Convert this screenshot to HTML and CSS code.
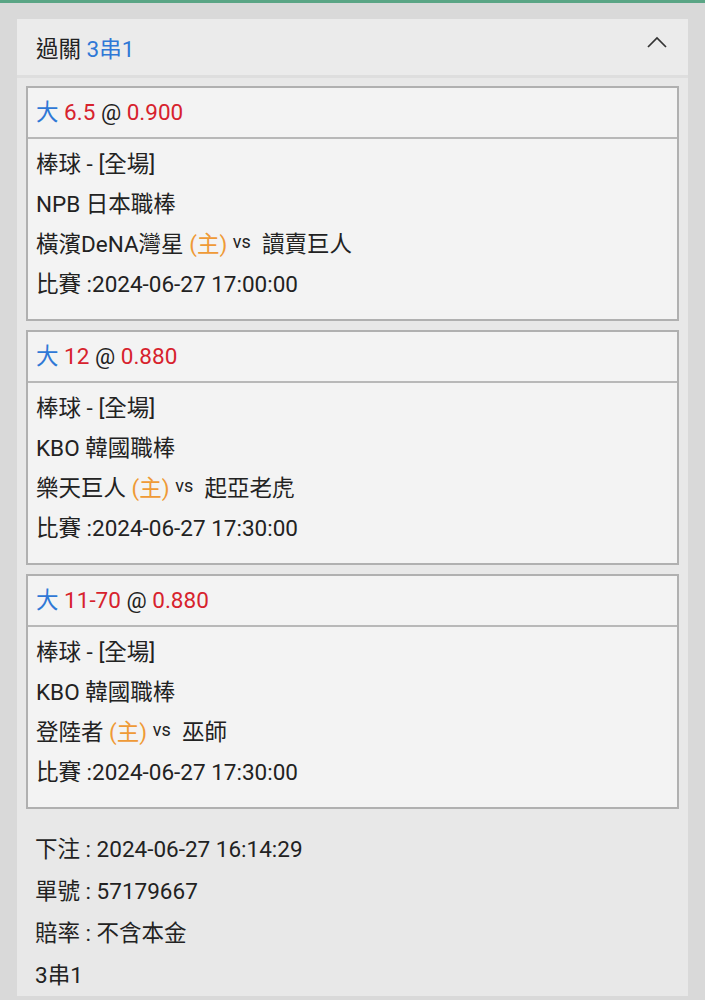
FILE: index.html
```html
<!DOCTYPE html>
<html lang="zh-Hant">

<head>
  <meta charset="UTF-8">
  <title>過關 3串1</title>
  <link rel="stylesheet" href="styles.css">
</head>

<body>
  <div class="panel">
    <div class="panel-head">
      <div class="title">過關 <span class="blue">3串1</span></div>
      <svg class="chevron" width="22" height="14" viewBox="0 0 22 14">
        <path d="M2 12 L11 3 L20 12" fill="none" stroke="#333" stroke-width="1.7" />
      </svg>
    </div>
    <div class="panel-body">
      <div class="bet">
        <div class="bet-title"><span class="blue">大</span> <span class="red">6.5</span> @ <span class="red">0.900</span></div>
        <div class="bet-info">
          <div>棒球 - [全場]</div>
          <div>NPB 日本職棒</div>
          <div>橫濱DeNA灣星 <span class="home">(主)</span> <sup>vs</sup> &nbsp;讀賣巨人</div>
          <div>比賽 :2024-06-27 17:00:00</div>
        </div>
      </div>
      <div class="bet">
        <div class="bet-title"><span class="blue">大</span> <span class="red">12</span> @ <span class="red">0.880</span></div>
        <div class="bet-info">
          <div>棒球 - [全場]</div>
          <div>KBO 韓國職棒</div>
          <div>樂天巨人 <span class="home">(主)</span> <sup>vs</sup> &nbsp;起亞老虎</div>
          <div>比賽 :2024-06-27 17:30:00</div>
        </div>
      </div>
      <div class="bet">
        <div class="bet-title"><span class="blue">大</span> <span class="red">11-70</span> @ <span class="red">0.880</span></div>
        <div class="bet-info">
          <div>棒球 - [全場]</div>
          <div>KBO 韓國職棒</div>
          <div>登陸者 <span class="home">(主)</span> <sup>vs</sup> &nbsp;巫師</div>
          <div>比賽 :2024-06-27 17:30:00</div>
        </div>
      </div>
      <div class="summary">
        <div>下注 : 2024-06-27 16:14:29</div>
        <div>單號 : 57179667</div>
        <div>賠率 : 不含本金</div>
        <div>3串1</div>
      </div>
    </div>
  </div>
</body>

</html>
```

FILE: styles.css
```css
body {
  margin: 0;
  background: #d9d9d9;
  border-top: 3px solid #5aa585;
  font-family: Roboto, "Noto Sans CJK TC", sans-serif;
  font-size: 22.5px;
  color: #222;
  height: 997px;
  overflow: hidden;
}

.panel {
  margin: 16px 17px 0;
  background: #e8e8e8;
}

.panel-head {
  height: 56px;
  padding: 0 19px;
  display: flex;
  align-items: center;
  justify-content: space-between;
  background: #ebebeb;
  border-bottom: 3px solid #dedede;
}

.chevron {
  margin-right: 1px;
  margin-top: -10px;
}

.blue {
  color: #2f78d6;
}

.red {
  color: #d7222d;
}

.home {
  color: #ef9a36;
}

sup {
  font-size: 18px;
  line-height: 0;
  vertical-align: 4px;
}

.panel-body {
  padding: 8px 9px 0;
}

.bet {
  background: #f3f3f3;
  border: 2px solid #b0b0b0;
  margin-bottom: 9px;
}

.bet-title {
  height: 49px;
  line-height: 49px;
  padding: 0 8px;
  border-bottom: 2px solid #b8b8b8;
}

.bet-info {
  padding: 5px 8px 15px;
}

.bet-info div {
  line-height: 40px;
}

.summary {
  padding: 10px 9px 0;
}

.summary div {
  line-height: 42px;
}
```
